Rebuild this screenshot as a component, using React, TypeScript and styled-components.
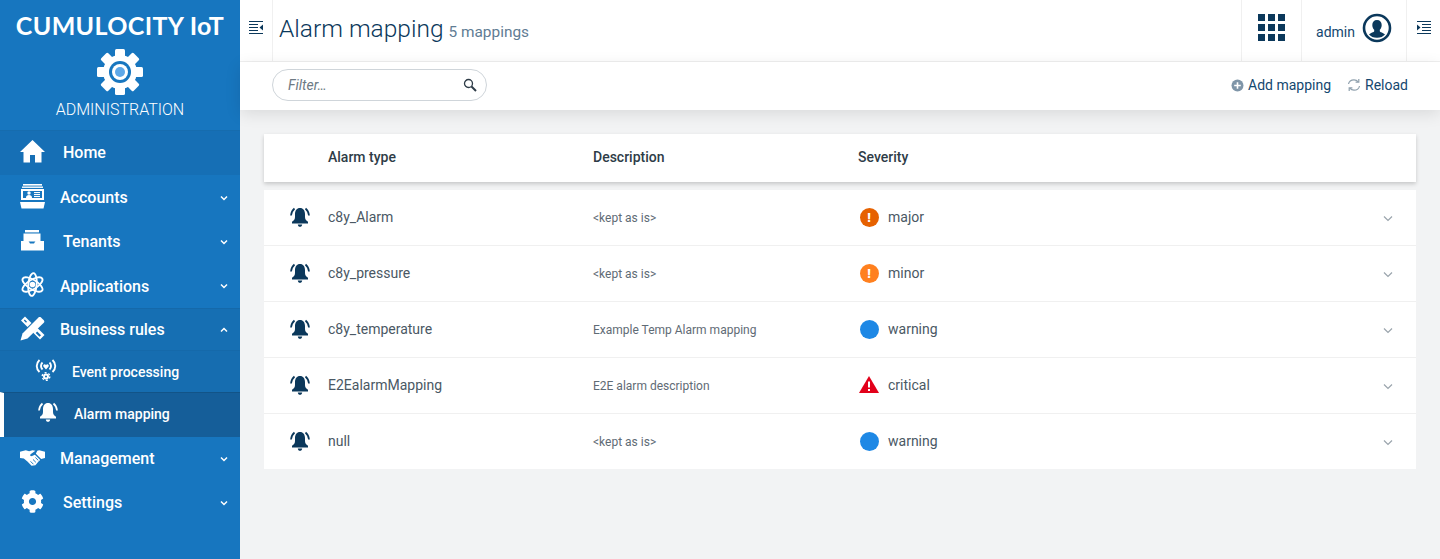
import React from 'react';
import styled, { createGlobalStyle } from 'styled-components';
import { FaCog } from 'react-icons/fa';

const GlobalStyle = createGlobalStyle`
  html, body {
    margin: 0;
    padding: 0;
    height: 100%;
    background: #f2f3f4;
    font-family: Roboto, 'Liberation Sans', sans-serif;
  }
  * { box-sizing: border-box; }
`;

const Page = styled.div`
  display: flex;
  width: 1440px;
  height: 559px;
  overflow: hidden;
`;

const Sidebar = styled.nav`
  width: 240px;
  flex-shrink: 0;
  background: #1776bf;
  color: #fff;
`;

const Brand = styled.div`
  height: 131px;
  display: flex;
  flex-direction: column;
  align-items: center;
  padding-top: 10px;
  border-bottom: 1px solid #166cae;
`;

const BrandName = styled.div`
  font-family: Lato, sans-serif;
  font-size: 25px;
  line-height: 30px;
  font-weight: 700;
  letter-spacing: 0.35px;
  white-space: nowrap;
`;

const BrandIcon = styled.svg`
  width: 48px;
  height: 48px;
  margin-top: 8px;
`;

const BrandLabel = styled.div`
  font-size: 16px;
  line-height: 18px;
  font-weight: 300;
  margin-top: 5px;
`;

const NavRow = styled.div<{ $height: number; $tone?: 'home' | 'open' }>`
  display: flex;
  align-items: center;
  height: ${(p) => p.$height}px;
  padding: 0 12px 0 20px;
  font-size: 16px;
  font-weight: 500;
  background: ${(p) => (p.$tone === 'home' ? '#166fb5' : p.$tone === 'open' ? '#166fb3' : 'transparent')};
  border-top: ${(p) => (p.$tone === 'open' ? '1px solid #1569aa' : 'none')};
  border-bottom: ${(p) => (p.$tone === 'open' ? '1px solid #1569aa' : 'none')};
`;

const NavIcon = styled.span<{ $wide?: boolean }>`
  display: flex;
  align-items: center;
  justify-content: center;
  width: 25px;
  height: 26px;
  margin-right: ${(p) => (p.$wide ? 15 : 18)}px;
  margin-bottom: 3px;
  svg { display: block; }
`;

const NavLabel = styled.span<{ $lift?: boolean }>`
  flex: 1;
  padding-bottom: ${(p) => (p.$lift ? 2 : 0)}px;
`;

const Caret = styled.svg`
  width: 8px;
  height: 6px;
`;

const SubRow = styled.div<{ $active?: boolean }>`
  display: flex;
  align-items: center;
  height: ${(p) => (p.$active ? 45 : 41)}px;
  padding-left: ${(p) => (p.$active ? 33 : 35)}px;
  padding-bottom: ${(p) => (p.$active ? 2 : 0)}px;
  font-size: 14px;
  font-weight: 500;
  background: ${(p) => (p.$active ? '#155e99' : '#166db0')};
  border-left: ${(p) => (p.$active ? '4px solid #fff' : 'none')};
  border-top: ${(p) => (p.$active ? '1px solid #125488' : 'none')};
`;

const SubIcon = styled.span`
  display: flex;
  justify-content: center;
  width: 22px;
  margin-right: 15px;
  margin-bottom: 3px;
`;

const Main = styled.main`
  flex: 1;
  min-width: 0;
`;

const TopBar = styled.header`
  display: flex;
  align-items: stretch;
  height: 62px;
  background: #fff;
  border-bottom: 1px solid #f0f0f0;
`;

const TopCell = styled.div<{ $width: number; $divider?: boolean }>`
  display: flex;
  align-items: center;
  justify-content: center;
  width: ${(p) => p.$width}px;
  padding-bottom: 6px;
  border-left: ${(p) => (p.$divider ? '1px solid #f0f0f0' : 'none')};
`;

const Heading = styled.div`
  flex: 1;
  display: flex;
  align-items: baseline;
  gap: 5px;
  padding: 11px 0 0 6px;
  border-left: 1px solid #f0f0f0;
`;

const Title = styled.h1`
  margin: 0;
  font-size: 24.5px;
  line-height: 36px;
  font-weight: 300;
  color: #0b385b;
`;

const Count = styled.span`
  font-size: 15.4px;
  color: #5f7c94;
`;

const UserName = styled.span`
  font-size: 14px;
  color: #14476f;
  margin: 8px 7px 0 0;
`;

const ActionBar = styled.div`
  display: flex;
  align-items: center;
  justify-content: space-between;
  height: 48px;
  padding: 0 32px 2px;
  background: #fff;
  box-shadow: 0 4px 16px rgba(0, 0, 0, 0.1);
  position: relative;
`;

const Filter = styled.div`
  display: flex;
  align-items: center;
  justify-content: space-between;
  width: 215px;
  height: 32px;
  padding: 0 9px 0 15px;
  border: 1px solid #cfd5da;
  border-radius: 16px;
  font-size: 14px;
  font-style: italic;
  color: #6d7a84;
`;

const Actions = styled.div`
  display: flex;
  align-items: center;
  gap: 16px;
`;

const Action = styled.span`
  display: flex;
  align-items: center;
  gap: 4px;
  font-size: 14px;
  color: #14476f;
`;

const Content = styled.div`
  padding: 24px 24px 0;
`;

const Columns = styled.div`
  display: grid;
  grid-template-columns: 64px 265px 265px 1fr 56px;
  align-items: center;
`;

const HeaderRow = styled(Columns)`
  height: 48px;
  padding-bottom: 2px;
  background: #fff;
  box-shadow: 0 2px 4px rgba(0, 0, 0, 0.18);
  font-size: 14px;
  font-weight: 500;
  color: #2e3c47;
`;

const Rows = styled.div`
  margin-top: 8px;
  background: #fff;
`;

const Row = styled(Columns)`
  height: 56px;
  border-bottom: 1px solid #f0f0f0;
  &:last-child { height: 55px; border-bottom: none; }
`;

const RowIcon = styled.span`
  display: flex;
  justify-content: center;
  padding-left: 7px;
`;

const TypeCell = styled.span`
  padding-bottom: 2px;
  font-size: 14px;
  color: #4a5864;
`;

const DescriptionCell = styled.span`
  font-size: 12px;
  color: #5f6b75;
`;

const SeverityCell = styled.span`
  display: flex;
  align-items: center;
  gap: 9px;
  padding-left: 1px;
  font-size: 14px;
  color: #4a5864;
`;

const SeverityName = styled.span`
  margin-bottom: 2px;
`;

const SeveritySlot = styled.span`
  display: flex;
  justify-content: center;
  width: 20px;
`;

const Dot = styled.span<{ $color: string }>`
  display: flex;
  align-items: center;
  justify-content: center;
  width: 19px;
  height: 19px;
  border-radius: 50%;
  background: ${(p) => p.$color};
  color: #fff;
  font-size: 13px;
  font-weight: 900;
  line-height: 1;
`;

const RowCaret = styled.span`
  display: flex;
  justify-content: center;
  padding-top: 2px;
  color: #9aa4ac;
`;

const BellIcon = ({ color }: { color: string }) => (
  <svg width="20" height="21" viewBox="0 0 20 21" fill={color}>
    <path d="M10 1c3.200 0 5 2.600 5 6v3c0 2 1 3.500 3 4.800v1.700H2v-1.700c2-1.300 3-2.800 3-4.800V7c0-3.400 1.800-6 5-6z" />
    <path d="M7.800 17.500h4.400c-.2 1.400-1 2.300-2.200 2.300s-2-.9-2.200-2.300z" />
    <path d="M1 8.500C1.300 5.500 2.500 3.200 4.500 1.500M19 8.500C18.700 5.500 17.500 3.200 15.500 1.500" fill="none" stroke={color} strokeWidth="1.700" />
  </svg>
);

const HomeIcon = () => (
  <svg width="25" height="23" viewBox="0 0 25 23" fill="#fff">
    <path d="M12.500 0L25 12h-3.500v10.500H15V15h-5v7.500H3.500V12H0z" />
  </svg>
);

const AccountsIcon = () => (
  <svg width="25" height="25" viewBox="0 0 25 25" fill="#fff">
    <rect x="3" y="0" width="19" height="1.600" />
    <rect x="2" y="2.500" width="21" height="1.400" />
    <path d="M1 5h23v11H1zM3 7v7h19V7z" fillRule="evenodd" />
    <circle cx="9" cy="9" r="1.700" />
    <path d="M6 14c0-2.300 1.200-3 3-3s3 .7 3 3z" />
    <rect x="14" y="8" width="6" height="1.100" />
    <rect x="14" y="10" width="6" height="1.100" />
    <rect x="14" y="12" width="6" height="1.100" />
    <path d="M0 18h25l-1.500 6.500h-22z" />
  </svg>
);

const TenantsIcon = () => (
  <svg width="25" height="21" viewBox="0 0 25 21" fill="#fff">
    <rect x="5" y="0" width="14" height="2.400" />
    <rect x="3.500" y="3.500" width="17" height="8" />
    <path d="M1 11h7.500l1.500 2.500h4l1.500-2.500H24v9.500H1z" />
  </svg>
);

const AtomIcon = () => (
  <svg width="25" height="25" viewBox="0 0 24 24" fill="none" stroke="#fff" strokeWidth="1.800">
    <circle cx="12" cy="12" r="1.800" fill="#fff" />
    <ellipse cx="12" cy="12" rx="11" ry="4.500" transform="rotate(32 12 12)" />
    <ellipse cx="12" cy="12" rx="11" ry="4.500" transform="rotate(-32 12 12)" />
    <ellipse cx="12" cy="12" rx="11" ry="4" transform="rotate(95 12 12)" />
  </svg>
);

const RulesIcon = () => (
  <svg width="25" height="25" viewBox="0 0 25 25" fill="#fff" fillRule="evenodd">
    <path d="M.5 24.500l2-7L18.500 1.500c.6-.6 1.700-.6 2.500 0l2.800 2.800c.7.800.7 1.800 0 2.500L7.500 22.500z" />
    <path d="M5 .5l6.500 6.500-4 4L1 4.500zM4.800 3.500L3.800 4.500l2.200 2.200 1-1z" />
    <path d="M17.500 12l7 7-4.500 4.500-7-7zM17.200 15.500l-1.500 1.500 3.800 3.800 1.500-1.500z" />
  </svg>
);

const HandshakeIcon = () => (
  <svg width="26" height="18" viewBox="0 0 26 18" fill="#fff">
    <path d="M0 2.500L6 1l3.500 1L13 1l3 .5L11 5c-1 1-.2 2.500 1.500 2l3-1.500L21 11l-2 2-3 3.500-4 .5-4-4-4-3.500L0 9z" />
    <path d="M18 1.500L20 1l6 1.500V9l-4 1-5.500-5.500z" />
    <path d="M14 15.500l-3-3M16.500 13.500l-3-3M19 11.500l-3-3" fill="none" stroke="#1776bf" strokeWidth="1" />
  </svg>
);

const EventIcon = () => (
  <svg width="22" height="22" viewBox="0 0 22 22" fill="none" stroke="#fff" strokeWidth="1.900">
    <path d="M4.500 1C.8 4.500.8 9.500 4.500 13M17.500 1c3.700 3.500 3.700 8.500 0 12M7.500 3.500c-2 2-2 5 0 7M14.500 3.500c2 2 2 5 0 7" />
    <path d="M11 10.500L8.400 7.500C7.500 5.800 9.800 4.300 11 6c1.200-1.700 3.500-.2 2.600 1.500z" fill="#fff" stroke="none" />
    <circle cx="11" cy="17.500" r="2" strokeWidth="2" />
    <circle cx="11" cy="17.500" r="3.800" strokeWidth="1.400" strokeDasharray="2 2" />
  </svg>
);

const LogoGear = () => (
  <BrandIcon viewBox="0 0 48 48">
    <g fill="#fff">
      {[0, 45, 90, 135, 180, 225, 270, 315].map((angle) => (
        <rect key={angle} x="19" y="1" width="10" height="12" rx="1.500" transform={`rotate(${angle} 24 24)`} />
      ))}
      <circle cx="24" cy="24" r="17" />
    </g>
    <circle cx="24" cy="24" r="11" fill="#1776bf" />
    <circle cx="24" cy="24" r="8" fill="#fff" />
    <circle cx="24" cy="24" r="5" fill="#5ea8e8" />
  </BrandIcon>
);

const ChevronDown = () => (
  <Caret viewBox="0 0 8 6" fill="none" stroke="#fff" strokeWidth="1.500">
    <path d="M1 1.500l3 3 3-3" />
  </Caret>
);

const ChevronUp = () => (
  <Caret viewBox="0 0 8 6" fill="none" stroke="#fff" strokeWidth="1.500">
    <path d="M1 4.500l3-3 3 3" />
  </Caret>
);

const MenuToggle = ({ flip }: { flip?: boolean }) => (
  <svg width="14" height="13" viewBox="0 0 14 13" fill="#0b385b" style={flip ? { transform: 'scaleX(-1)' } : undefined}>
    <rect x="0" y="0" width="14" height="1" />
    <rect x="0" y="3" width="9" height="1" />
    <rect x="0" y="6" width="9" height="1" />
    <rect x="0" y="9" width="9" height="1" />
    <rect x="0" y="12" width="14" height="1" />
    <path d="M14 3.500v6l-3.500-3z" />
  </svg>
);

const AppGrid = () => (
  <svg width="27" height="27" viewBox="0 0 27 27" fill="#0b385b">
    {[0, 10, 20].flatMap((y) =>
      [0, 10, 20].map((x) => <rect key={`${x}-${y}`} x={x} y={y} width="7" height="7" />),
    )}
  </svg>
);

const UserIcon = () => (
  <svg width="30" height="30" viewBox="0 0 30 30">
    <circle cx="15" cy="15" r="13" fill="#fff" stroke="#0b385b" strokeWidth="2.600" />
    <path
      d="M15 7c3 0 4.700 2 4.700 5 0 2-.8 3.800-1.900 4.800v1.400c0 1 3.800 1.500 5.200 3.300-1.800 2-4.400 3.300-8 3.300s-6.200-1.300-8-3.300c1.400-1.800 5.200-2.300 5.200-3.300v-1.400c-1.100-1-1.900-2.800-1.900-4.800 0-3 1.700-5 4.700-5z"
      fill="#0b385b"
    />
  </svg>
);

const SearchIcon = () => (
  <svg width="14" height="14" viewBox="0 0 14 14" fill="none" stroke="#2e3c47">
    <circle cx="5.500" cy="5.500" r="4" strokeWidth="1.300" />
    <path d="M8.500 8.500l4.500 4.500" strokeWidth="2" />
  </svg>
);

const PlusIcon = () => (
  <svg width="13" height="13" viewBox="0 0 13 13">
    <circle cx="6.500" cy="6.500" r="6" fill="#7f95a8" />
    <path d="M6.500 3.200v6.600M3.200 6.500h6.600" stroke="#fff" strokeWidth="1.600" />
  </svg>
);

const ReloadIcon = () => (
  <svg width="14" height="14" viewBox="0 0 14 14" fill="none" stroke="#8fa0ad" strokeWidth="1.200">
    <path d="M1.500 6C2 3.500 4.200 1.800 7 1.800c1.800 0 3.200.8 4.200 2M12.500 8c-.5 2.500-2.700 4.200-5.500 4.200-1.800 0-3.200-.8-4.200-2" />
    <path d="M11.800 1v3.200H8.600M2.200 13v-3.200h3.200" />
  </svg>
);

const RowChevron = () => (
  <svg width="10" height="7" viewBox="0 0 10 7" fill="none" stroke="currentColor" strokeWidth="1.200">
    <path d="M1 1.500l4 4 4-4" />
  </svg>
);

const TriangleMark = styled.svg`
  margin-bottom: 2px;
`;

const Triangle = () => (
  <TriangleMark width="20" height="17" viewBox="0 0 20 17">
    <path d="M10 0l10 17H0z" fill="#e2001a" />
    <path d="M9 5.500h2v6H9zM9 13h2v2H9z" fill="#fff" />
  </TriangleMark>
);

type Severity = 'major' | 'minor' | 'warning' | 'critical';

const SeverityIcon = ({ severity }: { severity: Severity }) => {
  if (severity === 'critical') return <Triangle />;
  if (severity === 'warning') return <Dot $color="#1e88e5" />;
  return <Dot $color={severity === 'major' ? '#e66100' : '#ff801f'}>!</Dot>;
};

const mappings: { type: string; description: string; severity: Severity }[] = [
  { type: 'c8y_Alarm', description: '<kept as is>', severity: 'major' },
  { type: 'c8y_pressure', description: '<kept as is>', severity: 'minor' },
  { type: 'c8y_temperature', description: 'Example Temp Alarm mapping', severity: 'warning' },
  { type: 'E2EalarmMapping', description: 'E2E alarm description', severity: 'critical' },
  { type: 'null', description: '<kept as is>', severity: 'warning' },
];

const App = () => {
  return (
    <Page>
      <GlobalStyle />
      <Sidebar>
        <Brand>
          <BrandName>CUMULOCITY IoT</BrandName>
          <LogoGear />
          <BrandLabel>ADMINISTRATION</BrandLabel>
        </Brand>
        <NavRow $height={44} $tone="home">
          <NavIcon><HomeIcon /></NavIcon>
          <NavLabel $lift>Home</NavLabel>
        </NavRow>
        <NavRow $height={45}>
          <NavIcon $wide><AccountsIcon /></NavIcon>
          <NavLabel>Accounts</NavLabel>
          <ChevronDown />
        </NavRow>
        <NavRow $height={44}>
          <NavIcon><TenantsIcon /></NavIcon>
          <NavLabel $lift>Tenants</NavLabel>
          <ChevronDown />
        </NavRow>
        <NavRow $height={44}>
          <NavIcon $wide><AtomIcon /></NavIcon>
          <NavLabel>Applications</NavLabel>
          <ChevronDown />
        </NavRow>
        <NavRow $height={43} $tone="open">
          <NavIcon $wide><RulesIcon /></NavIcon>
          <NavLabel>Business rules</NavLabel>
          <ChevronUp />
        </NavRow>
        <SubRow>
          <SubIcon><EventIcon /></SubIcon>
          Event processing
        </SubRow>
        <SubRow $active>
          <SubIcon><BellIcon color="#fff" /></SubIcon>
          Alarm mapping
        </SubRow>
        <NavRow $height={44}>
          <NavIcon $wide><HandshakeIcon /></NavIcon>
          <NavLabel $lift>Management</NavLabel>
          <ChevronDown />
        </NavRow>
        <NavRow $height={44}>
          <NavIcon><FaCog size={23} /></NavIcon>
          <NavLabel $lift>Settings</NavLabel>
          <ChevronDown />
        </NavRow>
      </Sidebar>
      <Main>
        <TopBar>
          <TopCell $width={32}><MenuToggle /></TopCell>
          <Heading>
            <Title>Alarm mapping</Title>
            <Count>5 mappings</Count>
          </Heading>
          <TopCell $width={60} $divider><AppGrid /></TopCell>
          <TopCell $width={105} $divider>
            <UserName>admin</UserName>
            <UserIcon />
          </TopCell>
          <TopCell $width={34} $divider><MenuToggle flip /></TopCell>
        </TopBar>
        <ActionBar>
          <Filter>
            Filter…
            <SearchIcon />
          </Filter>
          <Actions>
            <Action><PlusIcon />Add mapping</Action>
            <Action><ReloadIcon />Reload</Action>
          </Actions>
        </ActionBar>
        <Content>
          <HeaderRow>
            <span />
            <span>Alarm type</span>
            <span>Description</span>
            <span>Severity</span>
          </HeaderRow>
          <Rows>
            {mappings.map((mapping) => (
              <Row key={mapping.type}>
                <RowIcon><BellIcon color="#0b385b" /></RowIcon>
                <TypeCell>{mapping.type}</TypeCell>
                <DescriptionCell>{mapping.description}</DescriptionCell>
                <SeverityCell>
                  <SeveritySlot><SeverityIcon severity={mapping.severity} /></SeveritySlot>
                  <SeverityName>{mapping.severity}</SeverityName>
                </SeverityCell>
                <RowCaret><RowChevron /></RowCaret>
              </Row>
            ))}
          </Rows>
        </Content>
      </Main>
    </Page>
  );
};

export default App;
